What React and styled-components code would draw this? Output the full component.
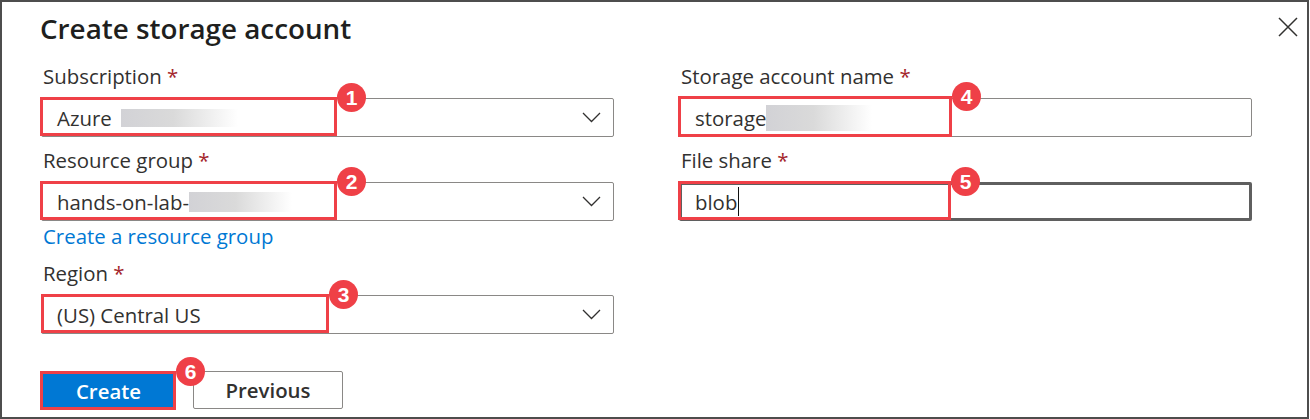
import React from "react";
import styled, { createGlobalStyle } from "styled-components";

const GlobalStyle = createGlobalStyle`
  body {
    margin: 0;
    background: #fff;
    font-family: "Open Sans", "Noto Sans", sans-serif;
    color: #323130;
  }
`;

const Frame = styled.div`
  box-sizing: border-box;
  width: 1309px;
  height: 419px;
  border: 2px solid #4d4d4d;
  padding: 8px 9px 0 39px;
  background: #fff;
`;

const Header = styled.div`
  display: flex;
  justify-content: space-between;
  align-items: flex-start;
`;

const Title = styled.h1`
  margin: 0 0 0 -1px;
  font-size: 27.8px;
  font-weight: 600;
  line-height: 36px;
  color: #201f1e;
`;

const CloseButton = styled.button`
  display: flex;
  margin-top: 7px;
  padding: 0;
  width: 20px;
  height: 20px;
  border: none;
  background: none;
  cursor: pointer;
`;

const Columns = styled.div`
  display: grid;
  grid-template-columns: 573px 573px;
  column-gap: 65px;
  align-items: start;
  margin-top: 16px;
`;

const Column = styled.div`
  display: flex;
  flex-direction: column;
`;

const Field = styled.div`
  margin-top: ${({ gap }) => gap || 0}px;
`;

const Label = styled.label`
  display: block;
  margin-bottom: 8px;
  padding-left: 2px;
  font-size: 20.4px;
  line-height: 28px;
  color: #323130;
`;

const Required = styled.span`
  color: #a4262c;
`;

const Marked = styled.div`
  position: relative;
`;

const Highlight = styled.div`
  position: absolute;
  top: ${({ top }) => top}px;
  left: ${({ left }) => left}px;
  width: ${({ width }) => width}px;
  height: ${({ height }) => height}px;
  box-sizing: border-box;
  border: 3px solid #ef4047;
  pointer-events: none;
`;

const Badge = styled.span`
  position: absolute;
  top: -17px;
  right: -32px;
  display: flex;
  align-items: center;
  justify-content: center;
  width: 29px;
  height: 29px;
  border-radius: 50%;
  background: #ef4047;
  color: #fff;
  font-family: "Liberation Sans", Arial, sans-serif;
  font-weight: bold;
  font-size: 21px;
`;

const Box = styled.div`
  display: flex;
  align-items: center;
  box-sizing: border-box;
  height: 39px;
  padding: 0 12px 0 ${({ focused }) => (focused ? 13 : 15)}px;
  border: ${({ focused }) => (focused ? "3px solid #5f5f5f" : "1px solid #8a8886")};
  border-radius: 2px;
  background: #fff;
  font-size: 20.4px;
  color: #323130;
`;

const Value = styled.span`
  display: flex;
  align-items: center;
  flex: 1;
  white-space: nowrap;
`;

const Redacted = styled.span`
  display: inline-block;
  width: ${({ width }) => width}px;
  height: ${({ height }) => height}px;
  margin-left: ${({ offset }) => offset || 0}px;
  background: linear-gradient(to right, #d2d2d6 0%, #dadada 45%, #ffffff 100%);
`;

const Caret = styled.span`
  display: inline-block;
  width: 1px;
  height: 29px;
  margin-left: 1px;
  background: #111;
`;

const Link = styled.a`
  margin-top: 1px;
  padding-left: 2px;
  font-size: 20.4px;
  line-height: 28px;
  color: #0078d4;
  text-decoration: none;
`;

const Footer = styled.div`
  display: flex;
  gap: 17px;
  margin-top: 37px;
`;

const PrimaryButton = styled.button`
  width: 135px;
  height: 39px;
  border: none;
  border-radius: 2px;
  background: #0078d4;
  color: #fff;
  font-family: inherit;
  font-size: 20.4px;
  font-weight: 600;
`;

const SecondaryButton = styled.button`
  width: 150px;
  height: 38px;
  border: 1px solid #8a8886;
  border-radius: 2px;
  background: #fff;
  color: #323130;
  font-family: inherit;
  font-size: 20.4px;
  font-weight: 600;
`;

const Chevron = () => (
  <svg width="19" height="11" viewBox="0 0 19 11">
    <polyline points="1,1 9.5,9.5 18,1" fill="none" stroke="#323130" strokeWidth="1.3" />
  </svg>
);

const CloseIcon = () => (
  <svg width="20" height="20" viewBox="0 0 20 20">
    <path d="M1 1 L19 19 M19 1 L1 19" stroke="#323130" strokeWidth="1.5" />
  </svg>
);

const Mark = ({ n, top = -1, left = -1, width, height = 39 }) => (
  <Highlight top={top} left={left} width={width} height={height}>
    <Badge>{n}</Badge>
  </Highlight>
);

const SelectField = ({ label, gap, mark, children }) => (
  <Field gap={gap}>
    <Label>
      {label} <Required>*</Required>
    </Label>
    <Marked>
      <Box>
        <Value>{children}</Value>
        <Chevron />
      </Box>
      {mark}
    </Marked>
  </Field>
);

const InputField = ({ label, gap, focused, mark, children }) => (
  <Field gap={gap}>
    <Label>
      {label} <Required>*</Required>
    </Label>
    <Marked>
      <Box focused={focused}>
        <Value>{children}</Value>
      </Box>
      {mark}
    </Marked>
  </Field>
);

export default function App() {
  return (
    <>
      <GlobalStyle />
      <Frame>
        <Header>
          <Title>Create storage account</Title>
          <CloseButton aria-label="Close">
            <CloseIcon />
          </CloseButton>
        </Header>
        <Columns>
          <Column>
            <SelectField label="Subscription" mark={<Mark n={1} width={297} />}>
              Azure
              <Redacted width={117} height={18} offset={9} />
            </SelectField>
            <SelectField label="Resource group" gap={9} mark={<Mark n={2} width={297} />}>
              hands-on-lab-
              <Redacted width={103} height={20} />
            </SelectField>
            <Link href="#">Create a resource group</Link>
            <SelectField label="Region" gap={9} mark={<Mark n={3} left={0} width={288} />}>
              (US) Central US
            </SelectField>
            <Footer>
              <Marked>
                <PrimaryButton>Create</PrimaryButton>
                <Mark n={6} top={0} left={-1} width={136} />
              </Marked>
              <SecondaryButton>Previous</SecondaryButton>
            </Footer>
          </Column>
          <Column>
            <InputField
              label="Storage account name"
              mark={<Mark n={4} top={-2} width={274} height={41} />}
            >
              storage
              <Redacted width={106} height={26} />
            </InputField>
            <InputField
              label="File share"
              gap={9}
              focused
              mark={<Mark n={5} top={-1} width={273} height={39} />}
            >
              blob
              <Caret />
            </InputField>
          </Column>
        </Columns>
      </Frame>
    </>
  );
}
